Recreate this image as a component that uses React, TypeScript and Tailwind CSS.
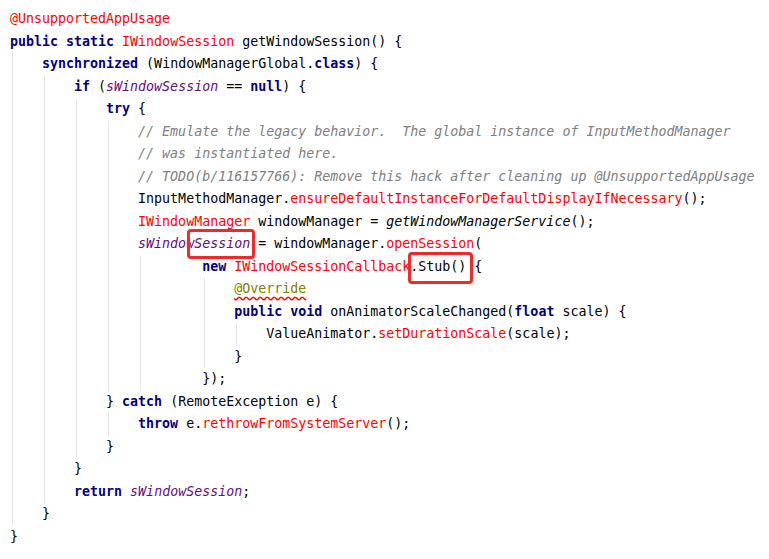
import React from "react";

type Tok = [string, string?];

const styles: Record<string, string> = {
  k: "font-bold text-[#000080]",
  r: "text-[#ff0000]",
  p: "italic text-[#660e7a]",
  c: "italic text-[#808080]",
  i: "italic",
  o: "text-[#808000] underline decoration-wavy decoration-[#ff0000] underline-offset-[3px]",
};

const lines: { ind: number; toks: Tok[] }[] = [
  { ind: 0, toks: [["@UnsupportedAppUsage", "r"]] },
  { ind: 0, toks: [["public static", "k"], [" "], ["IWindowSession", "r"], [" getWindowSession() {"]] },
  { ind: 4, toks: [["synchronized", "k"], [" (WindowManagerGlobal."], ["class", "k"], [") {"]] },
  { ind: 8, toks: [["if", "k"], [" ("], ["sWindowSession", "p"], [" == "], ["null", "k"], [") {"]] },
  { ind: 12, toks: [["try", "k"], [" {"]] },
  { ind: 16, toks: [["// Emulate the legacy behavior.  The global instance of InputMethodManager", "c"]] },
  { ind: 16, toks: [["// was instantiated here.", "c"]] },
  { ind: 16, toks: [["// TODO(b/116157766): Remove this hack after cleaning up @UnsupportedAppUsage", "c"]] },
  { ind: 16, toks: [["InputMethodManager."], ["ensureDefaultInstanceForDefaultDisplayIfNecessary", "r"], ["();"]] },
  { ind: 16, toks: [["IWindowManager", "r"], [" windowManager = "], ["getWindowManagerService", "i"], ["();"]] },
  { ind: 16, toks: [["sWindowSession", "p"], [" = windowManager."], ["openSession", "r"], ["("]] },
  { ind: 24, toks: [["new", "k"], [" "], ["IWindowSessionCallback", "r"], [".Stub() {"]] },
  { ind: 28, toks: [["@Override", "o"]] },
  { ind: 28, toks: [["public void", "k"], [" onAnimatorScaleChanged("], ["float", "k"], [" scale) {"]] },
  { ind: 32, toks: [["ValueAnimator."], ["setDurationScale", "r"], ["(scale);"]] },
  { ind: 28, toks: [["}"]] },
  { ind: 24, toks: [["});"]] },
  { ind: 12, toks: [["} "], ["catch", "k"], [" (RemoteException e) {"]] },
  { ind: 16, toks: [["throw", "k"], [" e."], ["rethrowFromSystemServer", "r"], ["();"]] },
  { ind: 12, toks: [["}"]] },
  { ind: 8, toks: [["}"]] },
  { ind: 8, toks: [["return", "k"], [" "], ["sWindowSession", "p"], [";"]] },
  { ind: 4, toks: [["}"]] },
  { ind: 0, toks: [["}"]] },
];

// indent guides: [column, firstLine, lastLine]
const guides: [number, number, number][] = [
  [0, 2, 22],
  [4, 3, 21],
  [8, 4, 19],
  [12, 5, 16],
  [12, 18, 18],
  [16, 11, 16],
  [24, 12, 15],
  [28, 14, 14],
];

const CW = 8;

export default function App() {
  return (
    <div className="relative w-[769px] h-[559px] bg-white overflow-hidden pt-2 pl-[10px] font-['DejaVu_Sans_Mono',monospace] text-[13.3px] text-black">
      {lines.map((ln, idx) => (
        <div key={idx} className="relative h-[22.5px] leading-[22.5px] whitespace-pre">
          {guides
            .filter(([, a, b]) => idx >= a && idx <= b)
            .map(([col]) => (
              <span
                key={col}
                className="absolute top-0 h-full w-px bg-[#e6e6e6]"
                style={{ left: col * CW + 2 }}
              />
            ))}
          <span className="relative">
            {" ".repeat(ln.ind)}
            {ln.toks.map(([t, s], j) => (
              <span key={j} className={s ? styles[s] : undefined}>
                {t}
              </span>
            ))}
          </span>
        </div>
      ))}

      {/* highlight boxes */}
      <div className="absolute left-[187px] top-[229px] w-[68px] h-[30px] border-[3px] border-[#f02a2a] rounded-[4px]" />
      <div className="absolute left-[408px] top-[252px] w-[65px] h-[32px] border-[3px] border-[#f02a2a] rounded-[4px]" />
    </div>
  );
}
